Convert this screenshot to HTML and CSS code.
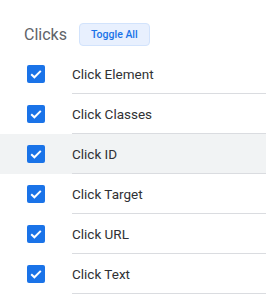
FILE: index.html
```html
<!DOCTYPE html>
<html>
<head>
<meta charset="utf-8">
<link rel="stylesheet" href="styles.css">
</head>
<body>
<div class="panel">
  <div class="header">
    <span class="title">Clicks</span>
    <button class="toggle">Toggle All</button>
  </div>
  <ul class="list">
    <li class="row"><span class="cb"><svg viewBox="0 0 18 18" width="18" height="18"><path d="M4.2 9.2 L7.4 12.3 L13.8 5.9" fill="none" stroke="#fff" stroke-width="2"/></svg></span><span class="label">Click Element</span></li>
    <li class="row"><span class="cb"><svg viewBox="0 0 18 18" width="18" height="18"><path d="M4.2 9.2 L7.4 12.3 L13.8 5.9" fill="none" stroke="#fff" stroke-width="2"/></svg></span><span class="label">Click Classes</span></li>
    <li class="row hover"><span class="cb"><svg viewBox="0 0 18 18" width="18" height="18"><path d="M4.2 9.2 L7.4 12.3 L13.8 5.9" fill="none" stroke="#fff" stroke-width="2"/></svg></span><span class="label">Click ID</span></li>
    <li class="row"><span class="cb"><svg viewBox="0 0 18 18" width="18" height="18"><path d="M4.2 9.2 L7.4 12.3 L13.8 5.9" fill="none" stroke="#fff" stroke-width="2"/></svg></span><span class="label">Click Target</span></li>
    <li class="row"><span class="cb"><svg viewBox="0 0 18 18" width="18" height="18"><path d="M4.2 9.2 L7.4 12.3 L13.8 5.9" fill="none" stroke="#fff" stroke-width="2"/></svg></span><span class="label">Click URL</span></li>
    <li class="row"><span class="cb"><svg viewBox="0 0 18 18" width="18" height="18"><path d="M4.2 9.2 L7.4 12.3 L13.8 5.9" fill="none" stroke="#fff" stroke-width="2"/></svg></span><span class="label">Click Text</span></li>
  </ul>
</div>
</body>
</html>
```

FILE: styles.css
```css
html, body {
  margin: 0;
  padding: 0;
  background: #fff;
  font-family: Roboto, "Liberation Sans", sans-serif;
}
.panel {
  padding-top: 22px;
}
.header {
  display: flex;
  align-items: center;
  padding-left: 24px;
  height: 24px;
  gap: 12px;
}
.title {
  font-size: 16px;
  color: #5f6368;
}
.toggle {
  font-family: Roboto, "Liberation Sans", sans-serif;
  font-size: 10.5px;
  font-weight: 500;
  color: #1a73e8;
  background: #e8f0fe;
  border: 1px solid #d2e3fc;
  border-radius: 4px;
  height: 23px;
  padding: 0 11px;
  margin: 0;
}
.list {
  list-style: none;
  margin: 8px 0 0 0;
  padding: 0;
}
.row {
  display: flex;
  align-items: center;
  height: 40px;
}
.row.hover {
  background: #f1f3f4;
}
.cb {
  width: 18px;
  height: 18px;
  margin-left: 27px;
  margin-right: 27px;
  background: #1a73e8;
  border-radius: 2px;
  display: flex;
}
.label {
  flex: 1;
  align-self: stretch;
  display: flex;
  align-items: center;
  font-size: 13.5px;
  color: #303134;
  border-bottom: 1px solid #dadce0;
}
```
